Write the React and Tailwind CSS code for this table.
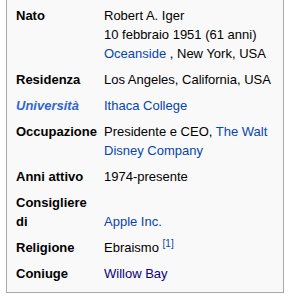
import React from 'react';

const link = 'text-[#0645ad]';

const Row = ({ label, children, labelClass = '', valueClass = '' }) => (
  <div className="flex pt-[4px] pb-[3px]">
    <div className={`w-[97px] shrink-0 pl-[9px] font-bold ${labelClass}`}>{label}</div>
    <div className={`w-[172px] ${valueClass}`}>{children}</div>
  </div>
);

const App = () => {
  return (
    <div
      className="w-[297px] h-[302px] bg-white text-[13px] leading-[19px] text-black"
      style={{ fontFamily: '"Liberation Sans", Arial, sans-serif' }}
    >
      <div className="ml-[6px] w-[278px] border-x border-b border-[#aaaaaa] bg-[#f9f9f9] pt-[2px] pb-[6px]">
        <Row label="Nato">
          <div>Robert A. Iger</div>
          <div>10 febbraio 1951 (61 anni)</div>
          <div>
            <span className={link}>Oceanside</span> , New York, USA
          </div>
        </Row>
        <Row label="Residenza">Los Angeles, California, USA</Row>
        <Row label={<span className="italic text-[#3366cc]">Università</span>}>
          <span className={link}>Ithaca College</span>
        </Row>
        <Row label="Occupazione">
          <div>
            Presidente e CEO, <span className={link}>The Walt</span>
          </div>
          <div className={link}>Disney Company</div>
        </Row>
        <Row label="Anni attivo">1974-presente</Row>
        <Row
          label={
            <>
              Consigliere
              <br />
              di
            </>
          }
          valueClass="self-end"
        >
          <span className={link}>Apple Inc.</span>
        </Row>
        <Row label="Religione">
          Ebraismo{' '}
          <sup className={`${link} text-[10px] relative -top-[5px]`}>[1]</sup>
        </Row>
        <Row label="Coniuge">
          <span className="text-[#0b0080]">Willow Bay</span>
        </Row>
      </div>
    </div>
  );
};

export default App;
